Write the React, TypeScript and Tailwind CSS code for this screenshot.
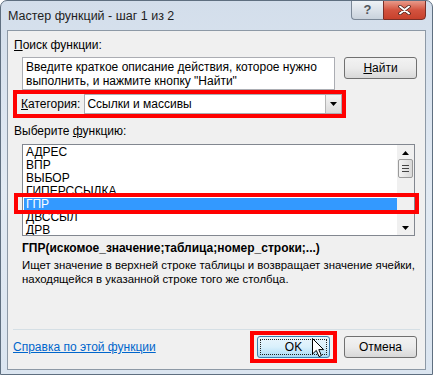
import React from 'react';

const font = { fontFamily: '"Liberation Sans", Arial, sans-serif' };

const functions = ['АДРЕС', 'ВПР', 'ВЫБОР', 'ГИПЕРССЫЛКА', 'ГПР', 'ДВССЫЛ', 'ДРВ'];

function Cursor() {
  return (
    <svg width={13} height={20} viewBox="0 0 13 20" className="absolute left-[58px] top-[3px]">
      <path d="M0.5 0.5 L0.5 16 L4.3 12.4 L7 18.6 L9.4 17.6 L6.8 11.6 L11.6 11.6 Z" fill="#fff" stroke="#000" strokeWidth={1} strokeLinejoin="round" />
    </svg>
  );
}

export default function App() {
  return (
    <div
      className="relative w-[433px] h-[375px] overflow-hidden rounded-t-[7px] border border-[#5f6f80] bg-gradient-to-b from-[#d3deeb] via-[#e2eaf3] to-[#dbe5f0] text-[12px] leading-[14px] text-black"
      style={font}
    >
      {/* Title bar */}
      <div className="flex h-[29px] items-center">
        <span className="ml-[7px] mt-[1px] text-[12.5px] text-[#1e1e1e]">Мастер функций - шаг 1 из 2</span>
        <div className="ml-auto mr-[6px] -mt-[1px] flex self-start">
          <div className="flex h-[20px] w-[32px] items-center justify-center rounded-bl-[4px] border border-[#7a8796] border-r-0 bg-gradient-to-b from-[#eef2f6] to-[#c9d2dc] text-[13px] font-bold text-[#50565c]">
            ?
          </div>
          <div className="flex h-[20px] w-[43px] items-center justify-center rounded-br-[4px] border border-[#7b2f27] bg-gradient-to-b from-[#e89a8a] via-[#d3533f] to-[#c7412c]">
            <svg width={13} height={10} viewBox="0 0 13 10">
              <path d="M2 1.5 L11 8.5 M11 1.5 L2 8.5" stroke="#3b1b16" strokeWidth={3.4} strokeLinecap="round" />
              <path d="M2 1.5 L11 8.5 M11 1.5 L2 8.5" stroke="#fff" strokeWidth={2} strokeLinecap="round" />
            </svg>
          </div>
        </div>
      </div>

      {/* Client area */}
      <div className="mx-[6px] h-[340px] border border-[#8d99a6] bg-[#f0f0f0] px-[5px]">
        <div className="mt-[7px] pl-[1px]">
          <span className="underline">П</span>оиск функции:
        </div>

        <div className="mt-[5px] flex items-start">
          <div className="ml-[9px] h-[33px] w-[313px] border border-[#abadb3] bg-white px-[3px] pt-[2px] text-[12px] leading-[14px]">
            Введите краткое описание действия, которое нужно выполнить, и нажмите кнопку "Найти"
          </div>
          <button className="ml-[9px] h-[22px] w-[73px] rounded-[3px] border border-[#707070] bg-gradient-to-b from-[#f2f2f2] via-[#ebebeb] to-[#d8d8d8] text-[12px]">
            <span className="underline">Н</span>айти
          </button>
        </div>

        <div className="flex h-[28px] w-[333px] items-center border-[4px] border-[#ff0000]">
          <div className="flex h-[20px] flex-1 items-center bg-[#f0f0f0] pl-[4px]">
            <span>
              <span className="underline">К</span>атегория:
            </span>
            <div className="ml-[4px] flex h-[20px] flex-1 items-center border border-[#abadb3] bg-white pl-[2px]">
              <span className="flex-1">Ссылки и массивы</span>
              <div className="flex h-[18px] w-[16px] items-center justify-center border-l border-[#b5b5b5] bg-gradient-to-b from-[#f4f4f4] to-[#dcdcdc]">
                <svg width={7} height={4} viewBox="0 0 7 4">
                  <path d="M0 0 H7 L3.5 4 Z" fill="#000" />
                </svg>
              </div>
            </div>
          </div>
        </div>

        <div className="mt-[6px] pl-[1px]">
          Выберите <span className="underline">ф</span>ункцию:
        </div>

        {/* Function list */}
        <div className="relative ml-[9px] mt-[6px] flex h-[92px] w-[393px] border border-[#828790] bg-white">
          <div className="flex-1 overflow-hidden pl-[1px] pt-[1px]">
            {functions.map((f) => (
              <div
                key={f}
                className={`h-[13px] pl-[2px] text-[12px] leading-[13px] ${f === 'ГПР' ? 'bg-[#3399ff] text-white' : ''}`}
              >
                {f}
              </div>
            ))}
          </div>
          <div className="flex w-[17px] flex-col items-center bg-[#f0f0f0]">
            <svg width={7} height={4} viewBox="0 0 7 4" className="mt-[6px]">
              <path d="M0 4 H7 L3.5 0 Z" fill="#000" />
            </svg>
            <div className="mt-[4px] flex h-[19px] w-[15px] flex-col items-center justify-center gap-[2px] rounded-[2px] border border-[#9a9a9a] bg-gradient-to-r from-[#f3f3f3] to-[#d9d9d9]">
              <div className="h-px w-[7px] bg-[#444]" />
              <div className="h-px w-[7px] bg-[#444]" />
              <div className="h-px w-[7px] bg-[#444]" />
            </div>
            <svg width={7} height={4} viewBox="0 0 7 4" className="mt-auto mb-[5px]">
              <path d="M0 0 H7 L3.5 4 Z" fill="#000" />
            </svg>
          </div>
          {/* highlight around selected row */}
          <div className="absolute left-[-9px] top-[48px] h-[21px] w-[405px] border-[4px] border-[#ff0000]" />
        </div>

        <div className="mt-[5px] ml-[9px] font-bold">ГПР(искомое_значение;таблица;номер_строки;...)</div>
        <div className="mt-[3px] ml-[9px] whitespace-nowrap text-[11.4px] leading-[14px]">
          Ищет значение в верхней строке таблицы и возвращает значение ячейки,
          <br />
          находящейся в указанной строке того же столбца.
        </div>

        <div className="mt-[43px] h-px bg-[#d5dfe5]" />

        <div className="flex items-center pt-[1px]">
          <span className="text-[#0066cc] underline">Справка по этой функции</span>
          <div className="relative ml-auto mr-[3px] flex h-[32px] w-[87px] items-center justify-center border-[4px] border-[#ff0000]">
            <button className="h-[22px] w-[73px] rounded-[3px] border border-[#3c7fb1] bg-gradient-to-b from-[#eaf6fd] via-[#d9f0fc] to-[#a7d9f5] p-[2px]">
              <div className="flex h-full items-center justify-center border border-dotted border-[#222]">OK</div>
            </button>
            <Cursor />
          </div>
          <button className="ml-[4px] mr-[3px] h-[22px] w-[73px] rounded-[3px] border border-[#707070] bg-gradient-to-b from-[#f2f2f2] via-[#ebebeb] to-[#d8d8d8]">
            Отмена
          </button>
        </div>
      </div>
    </div>
  );
}
